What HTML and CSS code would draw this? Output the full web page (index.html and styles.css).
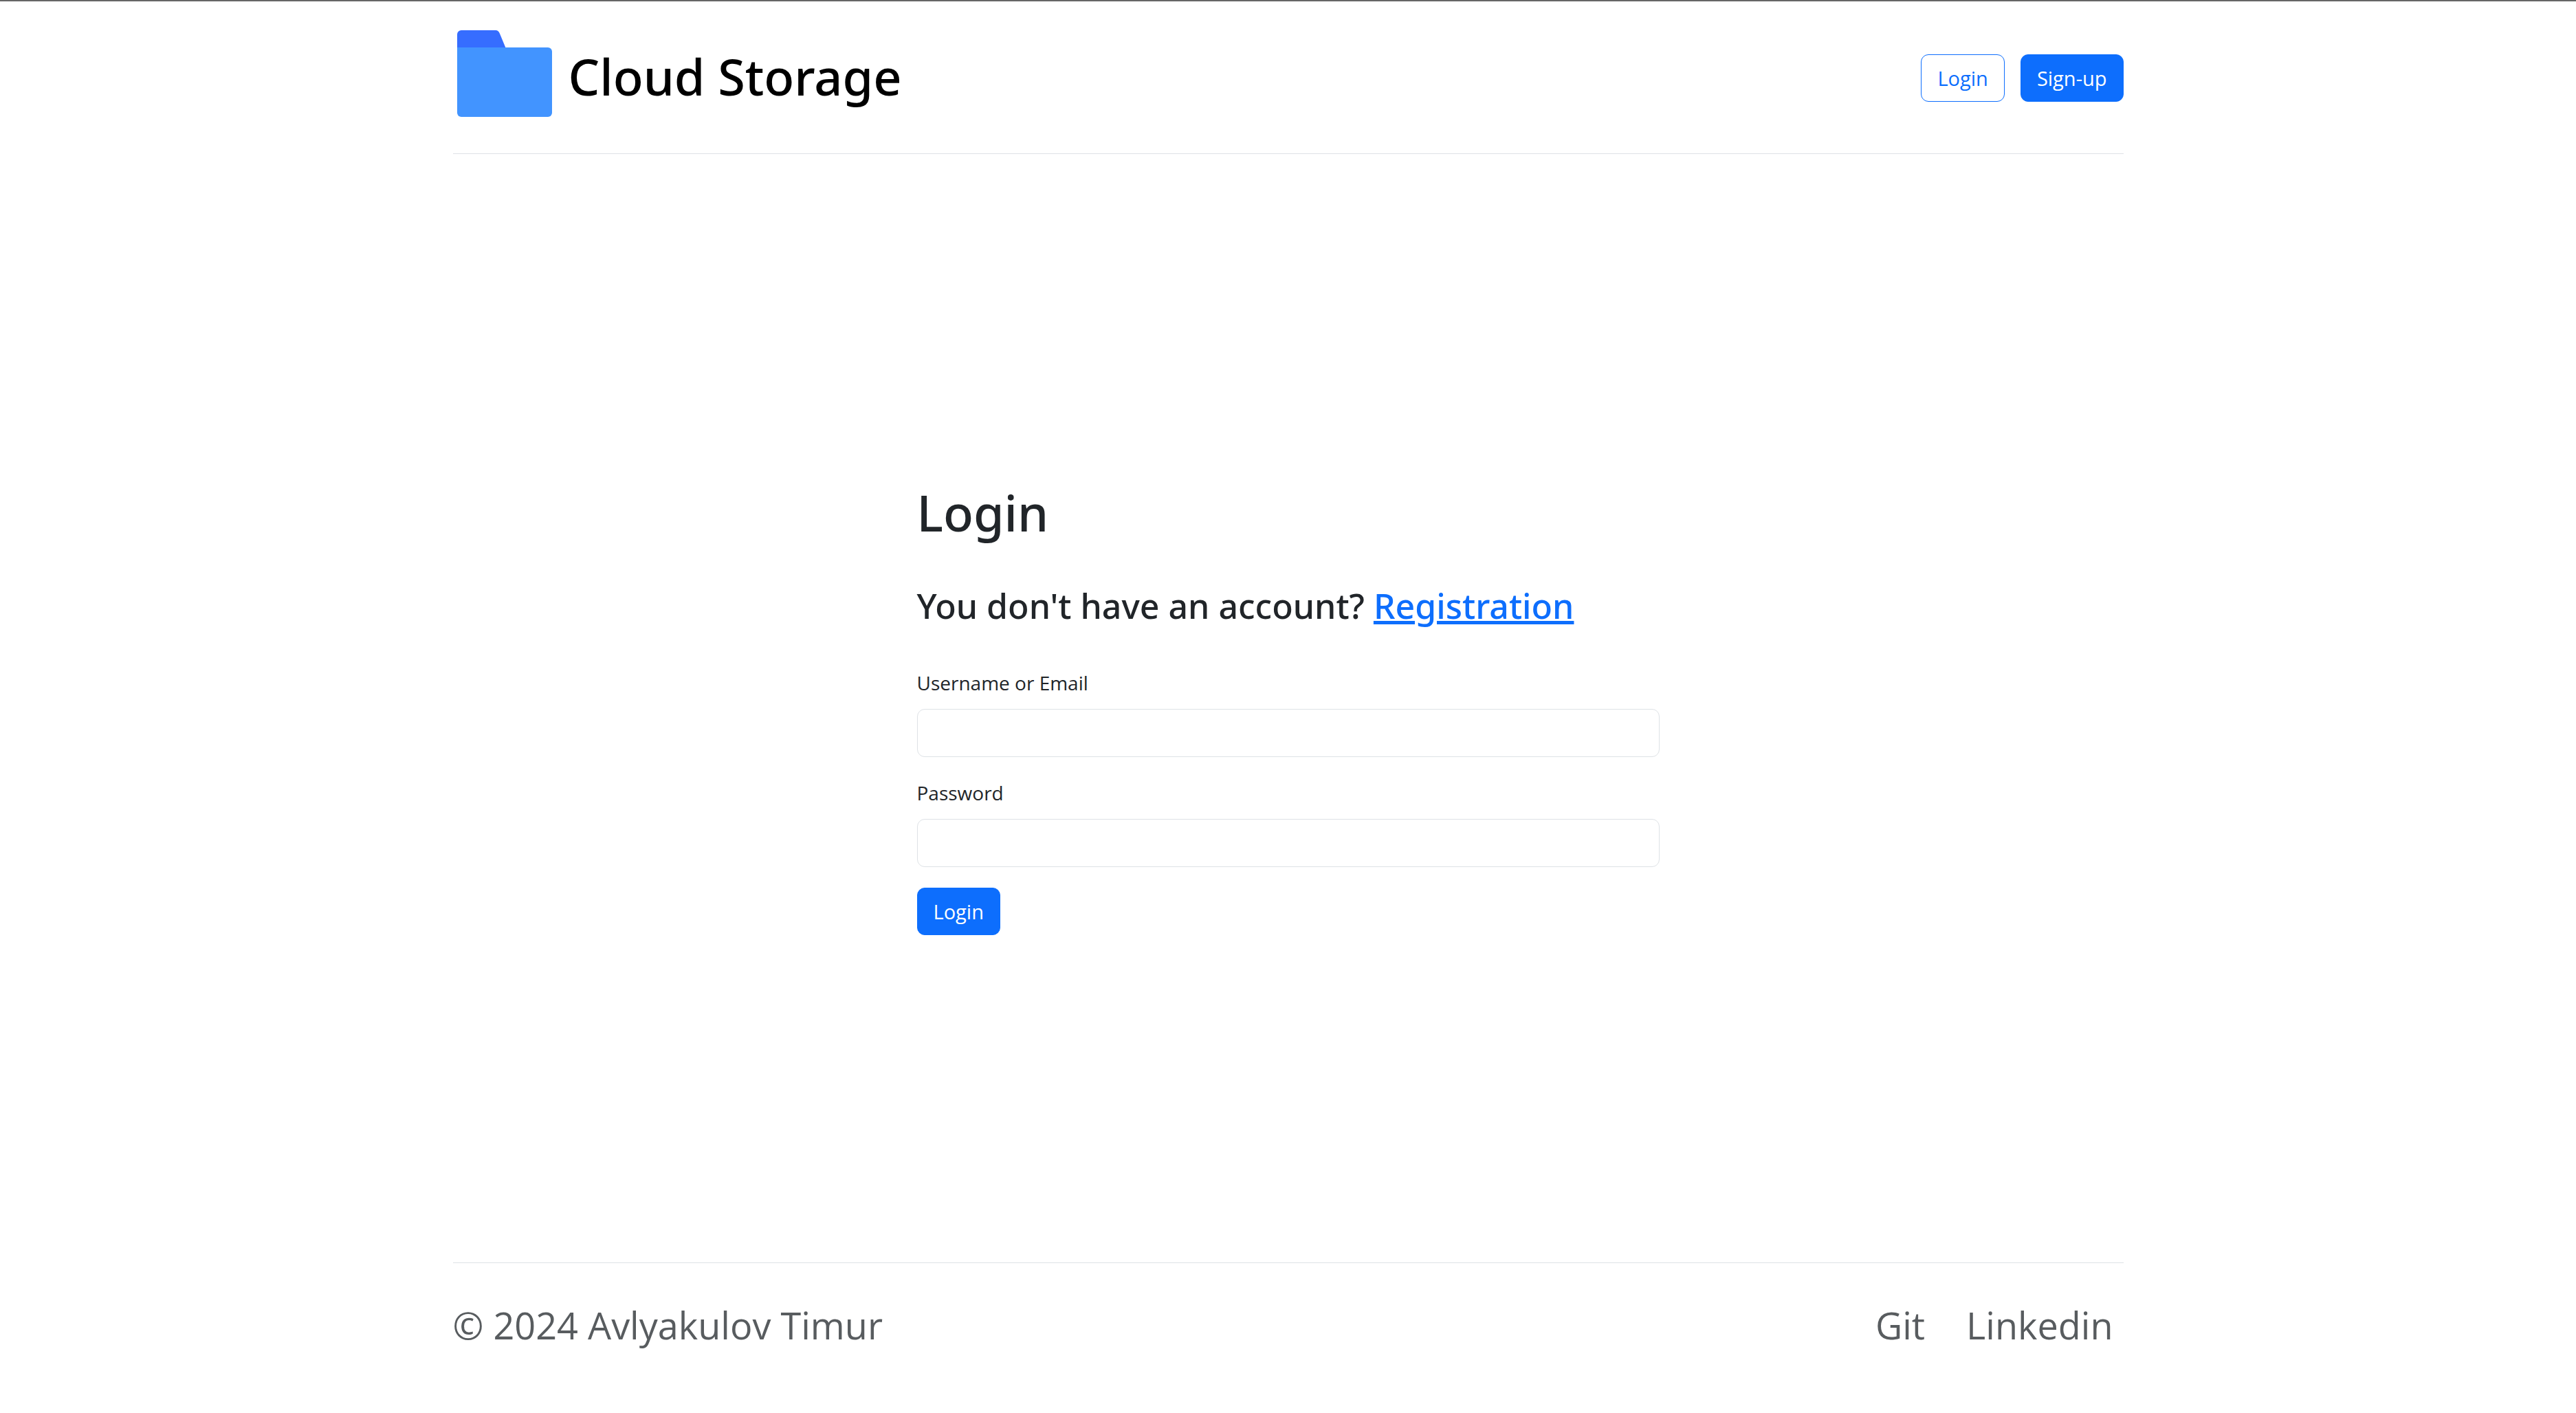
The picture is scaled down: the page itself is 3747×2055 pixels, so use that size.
FILE: index.html
```html
<!DOCTYPE html>
<html lang="en">
<head>
  <meta charset="utf-8">
  <meta name="viewport" content="width=device-width, initial-scale=1">
  <title>Cloud Storage – Login</title>
  <link rel="stylesheet" href="styles.css">
</head>
<body>
  <div class="page">
    <header class="header">
      <a class="brand" href="#">
        <svg class="brand-icon" viewBox="0 0 138 126" aria-hidden="true">
          <path fill="#366dff" d="M0 34V6a6 6 0 0 1 6-6h50q4 0 6 5l12 29z"/>
          <path fill="#4294ff" d="M0 25h132a6 6 0 0 1 6 6v89a6 6 0 0 1-6 6H6a6 6 0 0 1-6-6z"/>
        </svg>
        <span class="brand-name">Cloud Storage</span>
      </a>
      <div class="actions">
        <button class="btn btn-outline" type="button">Login</button>
        <button class="btn btn-primary" type="button">Sign-up</button>
      </div>
    </header>

    <main class="main">
      <form class="form">
        <h1 class="title">Login</h1>
        <h2 class="subtitle">You don't have an account? <a class="link" href="#">Registration</a></h2>
        <div class="field">
          <label class="label" for="username">Username or Email</label>
          <input class="input" id="username" name="username" type="text">
        </div>
        <div class="field">
          <label class="label" for="password">Password</label>
          <input class="input" id="password" name="password" type="password">
        </div>
        <button class="btn btn-primary" type="submit">Login</button>
      </form>
    </main>

    <footer class="footer">
      <span>© 2024 Avlyakulov Timur</span>
      <nav class="footer-nav">
        <a class="footer-link" href="#">Git</a>
        <a class="footer-link" href="#">Linkedin</a>
      </nav>
    </footer>
  </div>
</body>
</html>
```
FILE: styles.css
```css
*,
*::before,
*::after {
  box-sizing: border-box;
}

body {
  margin: 0;
  border-top: 2px solid #666;
  background: #fff;
  color: #212529;
  font-family: "Open Sans", "Noto Sans", sans-serif;
  font-size: 28px;
  line-height: 45px;
}

.page {
  display: flex;
  flex-direction: column;
  width: 90%;
  max-width: 2430px;
  min-height: calc(100vh - 2px);
  margin: 0 auto;
}

.header {
  display: flex;
  align-items: center;
  justify-content: space-between;
  padding: 42px 0 53px;
  border-bottom: 1px solid #dee2e6;
}

.brand {
  display: flex;
  align-items: center;
  gap: 24px;
  padding-left: 6px;
  color: #000;
  text-decoration: none;
}

.brand-icon {
  width: 138px;
  height: 126px;
}

.brand-name {
  padding-top: 8px;
  font-family: "Noto Sans", sans-serif;
  font-size: 72px;
  font-weight: 500;
  line-height: 90px;
}

.actions {
  display: flex;
  gap: 23px;
  padding-top: 12px;
}

.btn {
  padding: 11px 23px;
  border: 1px solid #0d6efd;
  border-radius: 11px;
  font: inherit;
  font-size: 29px;
  cursor: pointer;
}

.btn-outline {
  background: transparent;
  color: #0d6efd;
}

.btn-primary {
  background: #0d6efd;
  color: #fff;
}

.main {
  display: flex;
  flex: 1;
  align-items: center;
  justify-content: center;
}

.form {
  width: 100%;
  max-width: 1080px;
}

.title {
  margin: 0 0 60px;
  font-family: "Noto Sans", sans-serif;
  font-size: 72px;
  font-weight: 500;
  line-height: 90px;
}

.subtitle {
  margin: 0 0 58px;
  font-family: "Noto Sans", sans-serif;
  font-size: 50px;
  font-weight: 500;
  line-height: 63px;
}

.link {
  color: #0d6efd;
}

.field {
  display: flex;
  flex-direction: column;
  gap: 15px;
  margin-bottom: 30px;
}

.input {
  width: 100%;
  height: 70px;
  padding: 11px 23px;
  border: 1px solid #dee2e6;
  border-radius: 11px;
  background: #fff;
  color: inherit;
  font: inherit;
}

.footer {
  display: flex;
  align-items: center;
  justify-content: space-between;
  padding: 48px 0 86px;
  border-top: 1px solid #dee2e6;
  color: #585c5f;
  font-size: 54px;
  line-height: 84px;
}

.footer-nav {
  display: flex;
  gap: 60px;
  padding-right: 15px;
}

.footer-link {
  color: inherit;
  text-decoration: none;
}
```
